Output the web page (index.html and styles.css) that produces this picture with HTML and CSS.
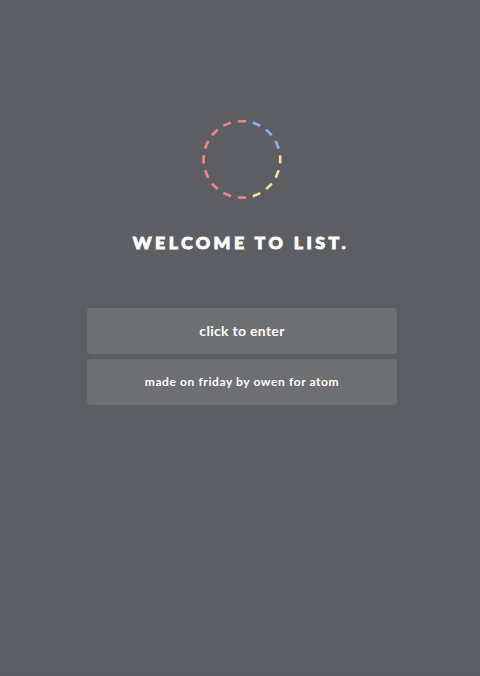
FILE: index.html
```html
<!DOCTYPE html>
<html lang="en">
<head>
<meta charset="utf-8">
<title>List</title>
<link rel="stylesheet" href="styles.css">
</head>
<body>
<main class="welcome">
  <svg class="ring" viewBox="-42 -42.4 84 84" aria-hidden="true">
    <defs>
      <path id="dash" d="M-4-38.2H4" />
      <g id="red-dashes">
        <use href="#dash" transform="rotate(180)"/><use href="#dash" transform="rotate(202.5)"/>
        <use href="#dash" transform="rotate(225)"/><use href="#dash" transform="rotate(247.5)"/>
        <use href="#dash" transform="rotate(270)"/><use href="#dash" transform="rotate(292.5)"/>
        <use href="#dash" transform="rotate(315)"/><use href="#dash" transform="rotate(337.5)"/>
        <use href="#dash"/>
      </g>
      <g id="blue-dashes">
        <use href="#dash" transform="rotate(22.5)"/><use href="#dash" transform="rotate(45)"/>
        <use href="#dash" transform="rotate(67.5)"/>
      </g>
      <g id="yellow-dashes">
        <use href="#dash" transform="rotate(90)"/><use href="#dash" transform="rotate(112.5)"/>
        <use href="#dash" transform="rotate(135)"/><use href="#dash" transform="rotate(157.5)"/>
      </g>
    </defs>
    <g class="shade">
      <use class="red" href="#red-dashes"/><use class="blue" href="#blue-dashes"/><use class="yellow" href="#yellow-dashes"/>
    </g>
    <g class="line">
      <use class="red" href="#red-dashes"/><use class="blue" href="#blue-dashes"/><use class="yellow" href="#yellow-dashes"/>
    </g>
  </svg>
  <h1 class="title">WELCOME TO LIST.</h1>
  <div class="actions">
    <button class="button enter" type="button">click to enter</button>
    <button class="button credit" type="button">made on friday by owen for atom</button>
  </div>
</main>
</body>
</html>
```
FILE: styles.css
```css
* { box-sizing: border-box; }
body {
  margin: 0;
  background: #5d5e63;
  color: #fff;
  font-family: Futura, Lato, sans-serif;
}
.welcome {
  display: flex;
  flex-direction: column;
  align-items: center;
  height: 676px;
  padding: 117px 0 0 4px;
  border-bottom: 1px solid #5f5965;
}
.ring {
  flex: none;
  width: 84px;
  height: 84px;
  fill: none;
  stroke-width: 2.5;
}
.shade { transform: translateX(-0.7px); }
.shade .red { stroke: #c9575e; }
.shade .blue { stroke: #5b83cc; }
.shade .yellow { stroke: #89712f; }
.line .red { stroke: #df8c8f; }
.line .blue { stroke: #8eaeea; }
.line .yellow { stroke: #f0dfa6; }
.title {
  margin: 29px 0 0;
  height: 24px;
  font-size: 17.8px;
  line-height: 24px;
  font-weight: 900;
  letter-spacing: 3.4px;
  -webkit-text-stroke: 0.9px #fff;
  white-space: nowrap;
  transform: translateX(-1px);
}
.actions {
  display: grid;
  gap: 5px;
  width: 310px;
  margin-top: 53.5px;
}
.button {
  height: 46px;
  padding: 0;
  border: 0;
  border-radius: 4px;
  background: #6e6f73;
  color: #fff;
  font-family: inherit;
  font-weight: 700;
  white-space: nowrap;
}
.enter { font-size: 14px; letter-spacing: 0.3px; }
.credit { font-size: 12px; letter-spacing: 0.6px; }
```
